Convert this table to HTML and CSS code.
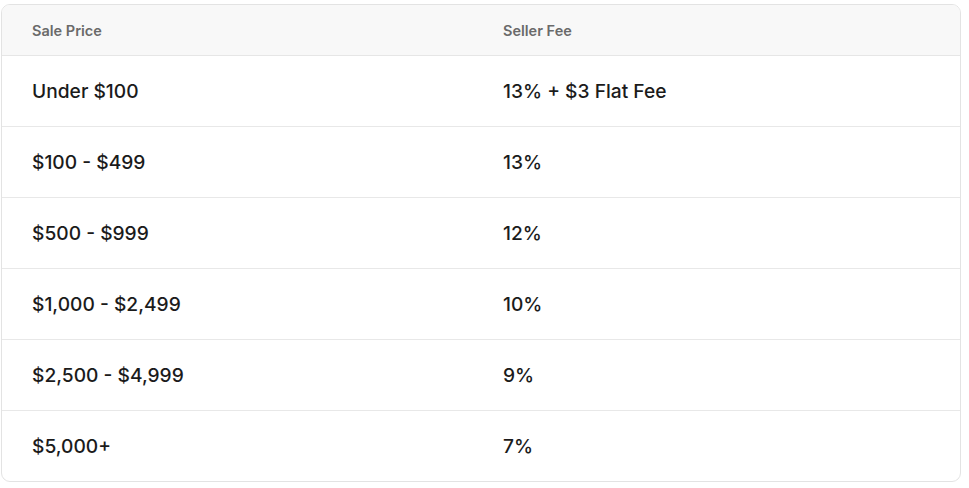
FILE: index.html
```html
<!DOCTYPE html>
<html lang="en">
<head>
<meta charset="utf-8">
<title>Seller Fees</title>
<link rel="stylesheet" href="styles.css">
</head>
<body>
<div class="wrap">
  <table class="fees">
    <thead>
      <tr><th class="c1">Sale Price</th><th>Seller Fee</th></tr>
    </thead>
    <tbody>
      <tr><td class="c1">Under $100</td><td>13% + $3 Flat Fee</td></tr>
      <tr><td class="c1">$100 - $499</td><td>13%</td></tr>
      <tr><td class="c1">$500 - $999</td><td>12%</td></tr>
      <tr><td class="c1">$1,000 - $2,499</td><td>10%</td></tr>
      <tr><td class="c1">$2,500 - $4,999</td><td>9%</td></tr>
      <tr><td class="c1">$5,000+</td><td>7%</td></tr>
    </tbody>
  </table>
</div>
</body>
</html>
```
FILE: styles.css
```css
html, body {
  margin: 0;
  padding: 0;
  background: #ffffff;
}
body {
  font-family: Inter, "Noto Sans", sans-serif;
  color: #1b1b1b;
}
.wrap {
  padding: 4px 0 0 1px;
}
.fees {
  width: 960px;
  border-collapse: separate;
  border-spacing: 0;
  border: 1px solid #e3e3e3;
  border-radius: 9px;
  overflow: hidden;
  table-layout: fixed;
}
.fees th, .fees td {
  text-align: left;
  padding: 0 0 0 30px;
}
.fees .c1 {
  width: 441px;
}
.fees thead th {
  background: #f8f8f8;
  height: 50px;
  font-size: 14.5px;
  font-weight: 600;
  color: #6a6a6a;
  border-bottom: 1px solid #e6e6e6;
}
.fees tbody td {
  height: 70px;
  font-size: 19.2px;
  font-weight: 450;
  border-bottom: 1px solid #e8e8e8;
}
.fees tbody tr:last-child td {
  border-bottom: none;
}
```
